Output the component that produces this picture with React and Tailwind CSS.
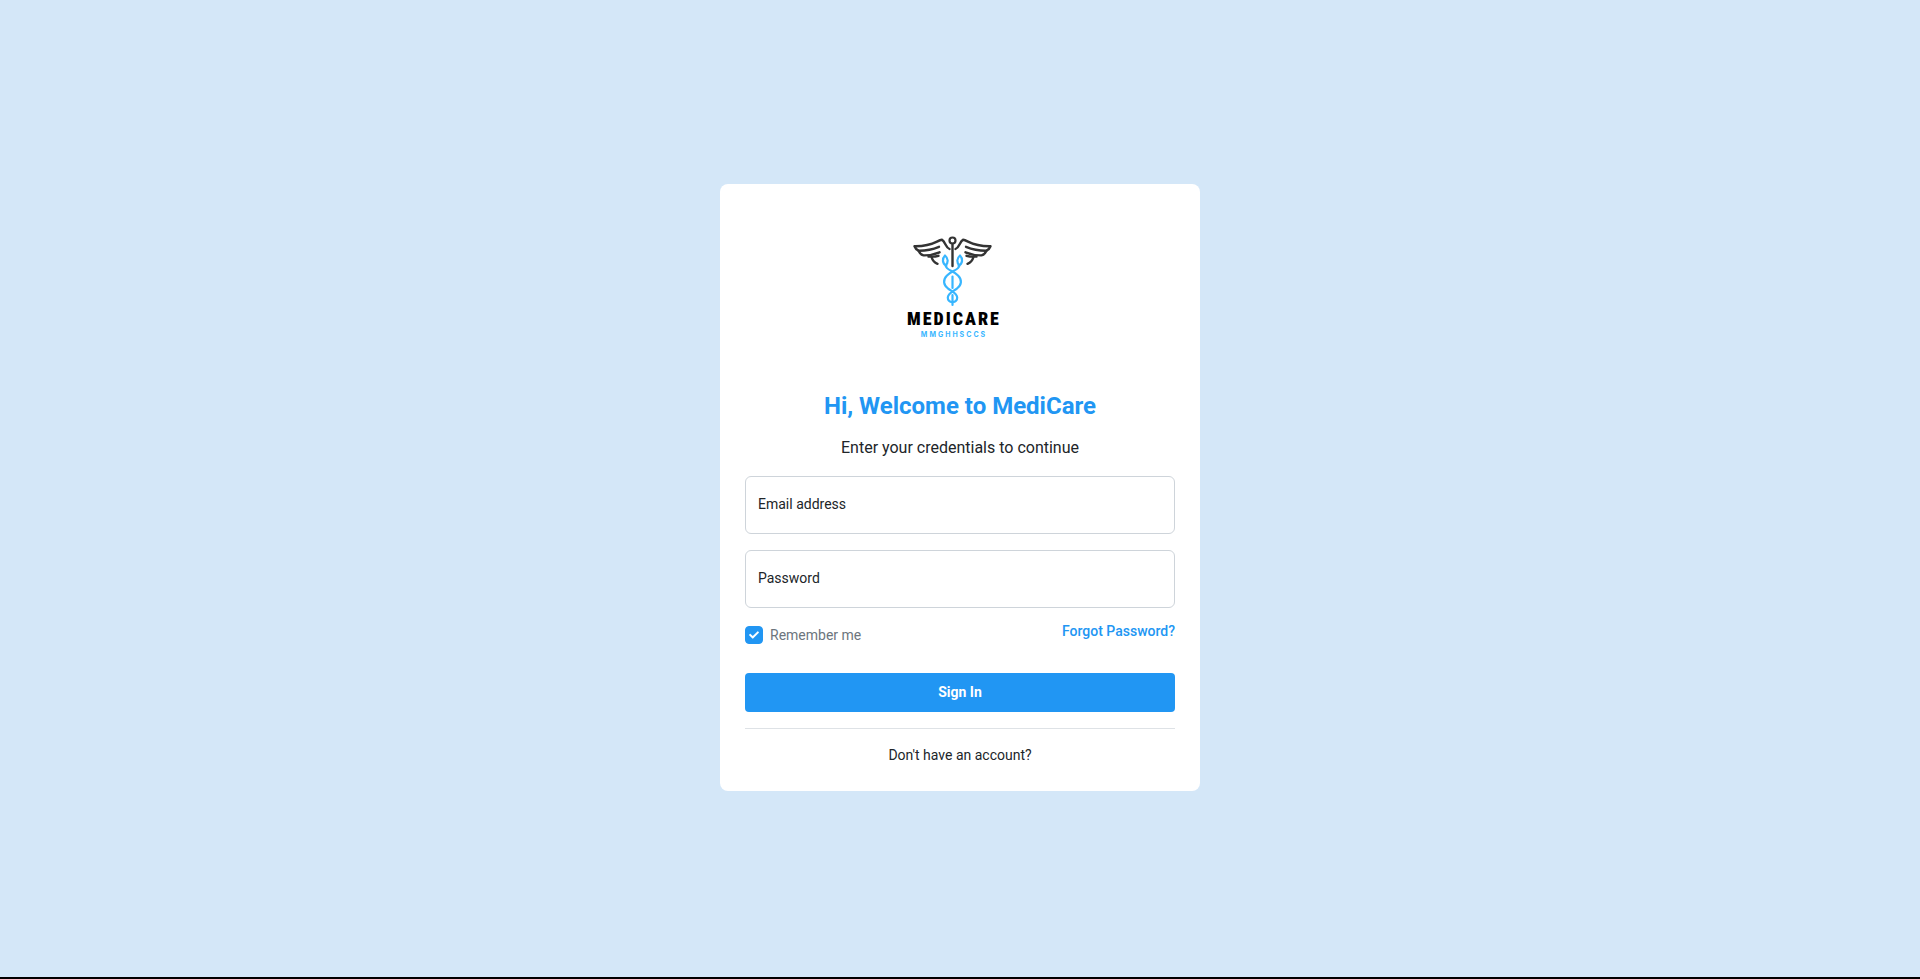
import { FaCheck } from "react-icons/fa";

function Wing() {
  return (
    <g stroke="#333333" strokeWidth="2.400">
      <path d="M69.500 40C65.500 38.500 65.500 33 62 30.800C56.500 31.500 53.500 37.500 34.500 37.200C35.500 39.800 36.800 41 38.500 41.700C47 41.800 52.500 40.500 59 37.800" />
      <path d="M38.500 41.700C39.800 44.500 41.500 46 43.500 46.400C49.500 46.600 54 45.500 59.500 43.300" />
      <path d="M48.500 47.500C54 48 56 47.500 58.500 46.800M51.500 48C52.500 51.500 54 53.500 57.500 54.800" />
    </g>
  );
}

function Snake() {
  return (
    <path
      stroke="#38b6ff"
      strokeWidth="2.200"
      d="M66.500 57C62 54.500 62 49.500 65 46.500C68.500 49.500 68.500 53.500 65.500 56.500C66 61 74 62 78 66.500C82.500 71 81.500 76 77 79.500C72 83 67.800 84.500 67.800 88.500C67.800 91.500 70 93 72.500 93.200"
    />
  );
}

function Logo() {
  return (
    <svg viewBox="0 0 160 160" className="mx-auto block size-40" fill="none" strokeLinecap="round" strokeLinejoin="round" role="img" aria-label="Medicare">
      <Wing />
      <g transform="matrix(-1 0 0 1 145 0)">
        <Wing />
        <Snake />
      </g>
      <Snake />
      <circle cx="72.500" cy="31.500" r="3" stroke="#333333" strokeWidth="2.200" />
      <path d="M72.500 35V57" stroke="#333333" strokeWidth="2.400" />
      <path d="M72.500 67.500V79M72.500 86V96" stroke="#38b6ff" strokeWidth="2.200" />
      <text x="74" y="116" textAnchor="middle" fill="#000000" className="font-['Roboto_Condensed','Roboto',sans-serif] text-[18px] font-black tracking-[2px]">
        MEDICARE
      </text>
      <text x="74" y="128" textAnchor="middle" fill="#38b6ff" className="font-['Inter',sans-serif] text-[7px] font-bold tracking-[2px]">
        MMGHHSCCS
      </text>
    </svg>
  );
}

function Field({ id, label, type }) {
  return (
    <div className="mb-4 grid items-center">
      <input
        id={id}
        type={type}
        placeholder=""
        className="peer col-start-1 row-start-1 h-[58px] w-full rounded-md border border-[#ced4da] bg-white px-3 text-sm text-[#212529] outline-none focus:border-[#2196f3]"
      />
      <label
        htmlFor={id}
        className="pointer-events-none col-start-1 row-start-1 px-[13px] pb-0.5 text-sm peer-focus:invisible peer-[:not(:placeholder-shown)]:invisible"
      >
        {label}
      </label>
    </div>
  );
}

export default function App() {
  return (
    <div className="flex min-h-screen flex-col border-b-2 border-black bg-[#d4e7f8] font-['Roboto',sans-serif] text-[#212529]">
      <main className="flex flex-1 items-center justify-center pb-0.5">
        <form className="w-full max-w-[480px] rounded-lg bg-white px-[25px] pt-[25px] pb-[26px]" onSubmit={(e) => e.preventDefault()}>
          <Logo />
          <h1 className="mt-[21px] text-center text-2xl font-bold text-[#2196f3]">Hi, Welcome to MediCare</h1>
          <p className="mt-3.5 mb-4 text-center text-base">Enter your credentials to continue</p>
          <Field id="email" label="Email address" type="email" />
          <Field id="password" label="Password" type="password" />
          <div className="flex items-start justify-between text-sm">
            <label className="mt-px flex items-center gap-[7px] text-[#6c757d]">
              <span className="grid size-[18px] place-items-center">
                <input type="checkbox" defaultChecked className="peer col-start-1 row-start-1 size-[18px] appearance-none rounded border border-[#ced4da] checked:border-[#2196f3] checked:bg-[#2196f3]" />
                <FaCheck className="pointer-events-none col-start-1 row-start-1 hidden size-2.5 text-white peer-checked:block" />
              </span>
              Remember me
            </label>
            <a href="#forgot" className="-mt-[3px] font-medium text-[#2196f3]">Forgot Password?</a>
          </div>
          <button type="submit" className="mt-7 block h-[39px] w-full rounded bg-[#2196f3] pb-0.5 text-sm font-bold text-white">Sign In</button>
          <hr className="my-4 border-t border-[#dee2e6]" />
          <p className="text-center text-sm">
            <a href="#register">Don't have an account?</a>
          </p>
        </form>
      </main>
    </div>
  );
}
